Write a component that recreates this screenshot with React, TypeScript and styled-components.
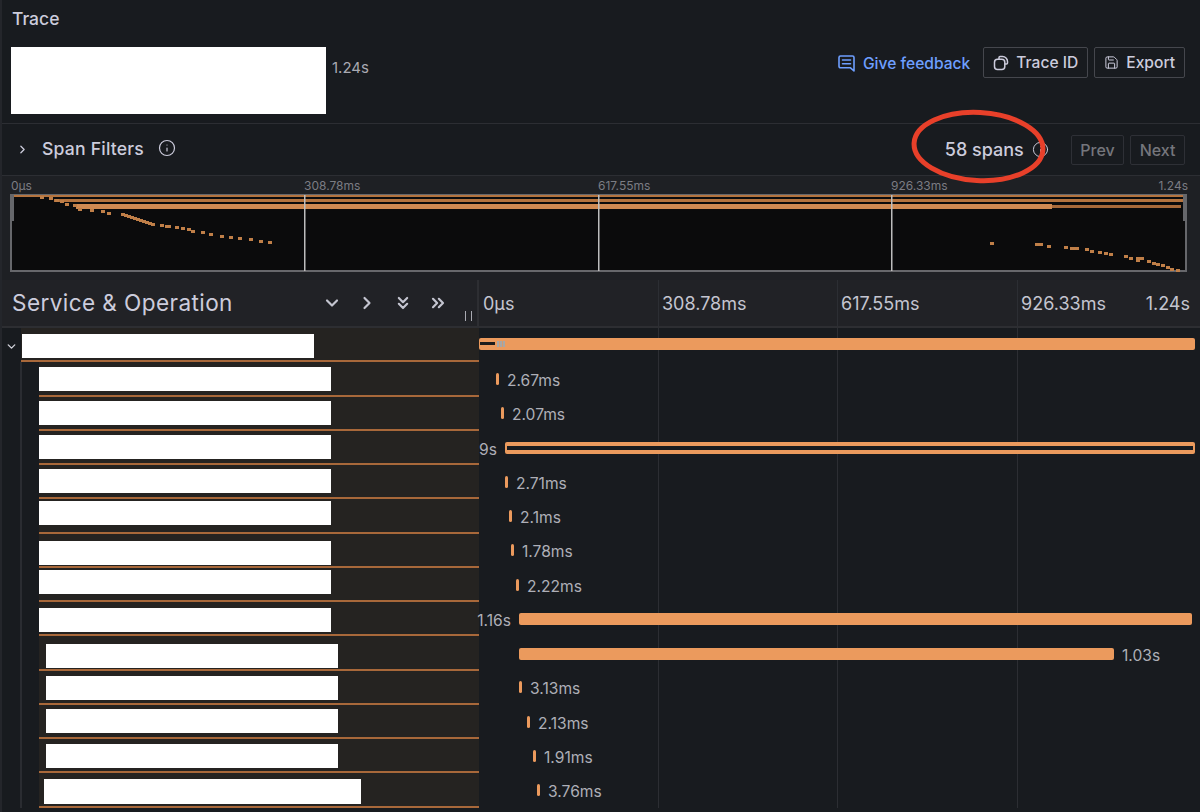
import styled, { createGlobalStyle } from 'styled-components';
import { ChevronDown, ChevronRight, ChevronsDown, ChevronsRight, Info, Save } from 'lucide-react';

type Span = {
  inset: number;
  boxWidth: number;
  boxTop: number;
  barTop?: number;
  left: number;
  width: number;
  label?: string;
  labelLeft?: boolean;
  hollow?: boolean;
};

const spans: Span[] = [
  { inset: 22, boxWidth: 292, boxTop: 5.5, barTop: 10, left: 0, width: 716 },
  { inset: 39, boxWidth: 292, boxTop: 4.25, left: 17, width: 3, label: '2.67ms' },
  { inset: 39, boxWidth: 292, boxTop: 4, left: 22, width: 3, label: '2.07ms' },
  { inset: 39, boxWidth: 292, boxTop: 3.75, left: 26, width: 690, label: '9s', labelLeft: true, hollow: true },
  { inset: 39, boxWidth: 292, boxTop: 3.5, left: 26, width: 3, label: '2.71ms' },
  { inset: 39, boxWidth: 292, boxTop: 1.25, left: 30, width: 3, label: '2.1ms' },
  { inset: 39, boxWidth: 292, boxTop: 7, left: 32, width: 3, label: '1.78ms' },
  { inset: 39, boxWidth: 292, boxTop: 1.75, left: 37, width: 3, label: '2.22ms' },
  { inset: 39, boxWidth: 292, boxTop: 5.5, left: 40, width: 673, label: '1.16s', labelLeft: true },
  { inset: 46, boxWidth: 292, boxTop: 7.25, barTop: 11.5, left: 40, width: 595, label: '1.03s' },
  { inset: 46, boxWidth: 292, boxTop: 5, left: 40, width: 3, label: '3.13ms' },
  { inset: 46, boxWidth: 292, boxTop: 3.75, left: 48, width: 3, label: '2.13ms' },
  { inset: 46, boxWidth: 292, boxTop: 4.5, left: 54, width: 3, label: '1.91ms' },
  { inset: 44, boxWidth: 317, boxTop: 5.25, left: 58, width: 3, label: '3.76ms' },
];

const miniDots: [number, number, number?][] = [
  [40, 196], [49, 197], [55, 199], [60, 200], [65, 203], [73, 204], [78, 208], [90, 209],
  [101, 210], [107, 212], [121, 213], [124, 214], [127, 215], [130, 216], [133, 217], [136, 218],
  [139, 219], [142, 220], [145, 221], [148, 222], [151, 223], [160, 224], [165, 225, 6], [175, 226],
  [181, 227], [187, 228], [191, 230], [201, 231], [209, 233], [220, 235], [229, 236], [238, 237],
  [249, 238], [259, 240], [268, 241],
  [990, 242], [1035, 243, 8], [1047, 245], [1064, 246], [1070, 247, 9], [1085, 248], [1090, 250],
  [1098, 251], [1104, 252], [1109, 253], [1124, 255], [1129, 257], [1136, 257, 8], [1136, 259],
  [1147, 260], [1152, 262], [1156, 263], [1161, 264], [1166, 266], [1170, 268], [1176, 269],
];

const GlobalStyle = createGlobalStyle`
  html, body {
    margin: 0;
    background: #181b1f;
  }
  * {
    box-sizing: border-box;
  }
`;

const Page = styled.div`
  position: relative;
  width: 1200px;
  height: 812px;
  overflow: hidden;
  background: #181b1f;
  color: #ccccdc;
  font-family: Inter, 'Liberation Sans', sans-serif;
  border-left: 2px solid #24262b;
`;

const TraceHeader = styled.header`
  height: 124px;
  padding: 8px 15px 0 9px;
  border-bottom: 1px solid #2c2e33;
`;

const TraceTitle = styled.div`
  margin-left: 1px;
  font-size: 17.5px;
  font-weight: 500;
  line-height: 21px;
`;

const HeaderRow = styled.div`
  display: flex;
  align-items: flex-start;
  margin-top: 18px;
`;

const Redacted = styled.div<{ $w: number; $h: number }>`
  flex: none;
  width: ${(p) => p.$w}px;
  height: ${(p) => p.$h}px;
  background: #fff;
`;

const Duration = styled.span`
  margin: 12px 0 0 6px;
  font-size: 15px;
  line-height: 18px;
  color: #a9aab2;
`;

const HeaderActions = styled.div`
  display: flex;
  align-items: center;
  gap: 6px;
  margin-left: auto;
`;

const FeedbackLink = styled.a`
  display: flex;
  align-items: center;
  gap: 7px;
  margin: 2px 7px 0 0;
  font-size: 15.6px;
  font-weight: 500;
  color: #6e9fff;
`;

const OutlineButton = styled.button<{ $muted?: boolean }>`
  display: flex;
  align-items: center;
  justify-content: center;
  gap: 7px;
  height: ${(p) => (p.$muted ? 30 : 31)}px;
  padding: 0 ${(p) => (p.$muted ? 8.5 : 9)}px;
  background: transparent;
  border: 1px solid ${(p) => (p.$muted ? '#2e3036' : '#45474d')};
  border-radius: 2px;
  font-family: inherit;
  font-size: ${(p) => (p.$muted ? 16 : 15.6)}px;
  font-weight: 500;
  color: ${(p) => (p.$muted ? '#75767c' : '#ccccdc')};
`;

const FilterBar = styled.div`
  display: flex;
  align-items: center;
  height: 52px;
  padding: 0 15px 0 14px;
  border-bottom: 1px solid #2c2e33;
`;

const FilterTitle = styled.span`
  margin: 0 14px 3px 13px;
  font-size: 17.6px;
  font-weight: 500;
  letter-spacing: 0.2px;
`;

const FilterInfo = styled(Info)`
  margin-bottom: 3px;
`;

const SpanCount = styled.div`
  display: flex;
  align-items: center;
  gap: 8px;
  margin: 0 22px 0 auto;
  font-size: 18px;
  font-weight: 500;
`;

const FilterPager = styled.div`
  display: flex;
  gap: 6px;
`;

const MinimapSection = styled.section`
  height: 104px;
  padding: 2px 12px 0 8px;
  background: #1e2024;
`;

const MinimapTicks = styled.div`
  display: grid;
  grid-template-columns: 293px 294px 293px 1fr;
  height: 16px;
  padding-left: 1px;
  font-size: 12px;
  line-height: 16px;
  color: #7b7c83;
`;

const MinimapLast = styled.div`
  display: flex;
  justify-content: space-between;
`;

const MinimapChart = styled.svg`
  display: block;
  width: 1177px;
  height: 78px;
`;

const TableHeader = styled.div`
  display: grid;
  grid-template-columns: 477px 1fr;
  height: 48px;
  background: #212226;
  border-bottom: 2px solid #2d2e32;
`;

const ServiceHead = styled.div`
  position: relative;
  display: flex;
  align-items: center;
  padding: 0 29px 0 10px;
  border-right: 2px solid #2d2e32;
`;

const ServiceTitle = styled.h2`
  margin: 0 auto 1px 0;
  font-size: 22.6px;
  font-weight: 400;
  letter-spacing: 0.4px;
  color: #ccccdc;
`;

const CollapseButtons = styled.div`
  display: flex;
  gap: 15.5px;
  color: #c4c5d0;
`;

const ResizeGrip = styled.span`
  position: absolute;
  right: 5px;
  bottom: 5px;
  width: 7px;
  height: 10px;
  border-left: 1px solid #a9aab2;
  border-right: 1px solid #a9aab2;
`;

const TimeHead = styled.div`
  display: grid;
  grid-template-columns: 179px 179px 180px 1fr;
  font-size: 18px;
`;

const TimeCell = styled.div`
  display: flex;
  align-items: center;
  justify-content: space-between;
  padding: 0 10px 0 4px;
  color: #c4c5d0;

  & + & {
    border-left: 1px solid #2c2e33;
    padding-left: 3px;
  }
`;

const SpanRow = styled.div`
  display: grid;
  grid-template-columns: 477px 1fr;
  height: 34.25px;
`;

const NameCell = styled.div`
  display: flex;
`;

const Gutter = styled.div<{ $w: number }>`
  flex: none;
  width: ${(p) => p.$w}px;
  display: flex;
  align-items: center;
  padding-left: 3px;
  color: #d0d1d9;
`;

const GuideLine = styled.span`
  width: 17px;
  height: 100%;
  border-right: 2px solid #2a2c31;
`;

const RowToggle = styled(ChevronDown)`
  margin-top: 3px;
`;

const NameBody = styled.div<{ $top: number; $pad: number }>`
  flex: 1;
  padding: ${(p) => p.$top}px 0 0 ${(p) => p.$pad}px;
  background: #252321;
  border-bottom: 2px solid #a8683a;
`;

const Track = styled.div`
  position: relative;
  background:
    linear-gradient(#2c2e33, #2c2e33) 179px 0 / 1px 100% no-repeat,
    linear-gradient(#2c2e33, #2c2e33) 358px 0 / 1px 100% no-repeat,
    linear-gradient(#2c2e33, #2c2e33) 538px 0 / 1px 100% no-repeat;
`;

const Bar = styled.div`
  position: absolute;
  height: 12px;
  background: #eb9a5d;
  border-radius: 2px;
`;

const BarHollow = styled.span`
  position: absolute;
  inset: 4px 2px;
  background: #181b1f;
`;

const BarLog = styled.span`
  position: absolute;
  left: 1px;
  top: 4px;
  width: 15px;
  height: 3px;
  background: #1c1c1c;
`;

const BarTicks = styled.span`
  position: absolute;
  left: 18px;
  top: 3px;
  width: 8px;
  height: 6px;
  background: repeating-linear-gradient(90deg, #a8a7a6 0 2px, #d69a6c 2px 3px);
`;

const BarLabel = styled.span<{ $left?: boolean }>`
  position: absolute;
  top: -1px;
  ${(p) => (p.$left ? 'right: calc(100% + 8px);' : 'left: calc(100% + 8px);')}
  font-size: 15.6px;
  line-height: 18px;
  white-space: nowrap;
  color: #aeafb7;
`;

const Annotation = styled.svg`
  position: absolute;
  left: 898px;
  top: 100px;
  width: 160px;
  height: 95px;
  pointer-events: none;
`;

const FeedbackIcon = () => (
  <svg width="19" height="19" viewBox="0 0 19 19" fill="none" stroke="currentColor" strokeWidth="1.6">
    <path d="M3.5 2h12A1.5 1.5 0 0 1 17 3.5V17l-3.5-3.2h-10A1.5 1.5 0 0 1 2 12.3V3.5A1.5 1.5 0 0 1 3.5 2Z" strokeLinejoin="round" />
    <path d="M5.5 6h8M5.5 9.7h8" strokeLinecap="round" />
  </svg>
);

const CopyIcon = () => (
  <svg width="16" height="16" viewBox="0 0 16 16" fill="none" stroke="currentColor" strokeWidth="1.5" strokeLinejoin="round">
    <path d="M6 4.2V2.5A1 1 0 0 1 7 1.5h2.5a5 5 0 0 1 5 5V8a1 1 0 0 1-1 1h-1.7" />
    <rect x="1.5" y="4.2" width="10.3" height="10.3" rx="3" />
  </svg>
);

const App = () => {
  return (
    <Page>
      <GlobalStyle />
      <TraceHeader>
        <TraceTitle>Trace</TraceTitle>
        <HeaderRow>
          <Redacted $w={315} $h={67} />
          <Duration>1.24s</Duration>
          <HeaderActions>
            <FeedbackLink>
              <FeedbackIcon />
              Give feedback
            </FeedbackLink>
            <OutlineButton>
              <CopyIcon />
              Trace ID
            </OutlineButton>
            <OutlineButton>
              <Save size={15} strokeWidth={1.6} />
              Export
            </OutlineButton>
          </HeaderActions>
        </HeaderRow>
      </TraceHeader>

      <FilterBar>
        <ChevronRight size={13} strokeWidth={2.4} />
        <FilterTitle>Span Filters</FilterTitle>
        <FilterInfo size={18} strokeWidth={1.6} />
        <SpanCount>
          58 spans
          <Info size={17} strokeWidth={1.4} />
        </SpanCount>
        <FilterPager>
          <OutlineButton $muted>Prev</OutlineButton>
          <OutlineButton $muted>Next</OutlineButton>
        </FilterPager>
      </FilterBar>

      <MinimapSection>
        <MinimapTicks>
          <div>0µs</div>
          <div>308.78ms</div>
          <div>617.55ms</div>
          <MinimapLast>
            <span>926.33ms</span>
            <span>1.24s</span>
          </MinimapLast>
        </MinimapTicks>
        <MinimapChart viewBox="10 194 1177 78">
          <rect x="11" y="195" width="1175" height="76" fill="#0b0b0c" stroke="#66676b" strokeWidth="2" />
          <rect x="13" y="195" width="1171" height="2" fill="#b5743f" />
          <rect x="54" y="199" width="1129" height="3" fill="#b5743f" />
          <rect x="76" y="204" width="976" height="5" fill="#d08a52" />
          <rect x="1052" y="205" width="129" height="3" fill="#a86a3a" />
          {miniDots.map(([x, y, w], i) => (
            <rect key={i} x={x} y={y} width={w ?? 4} height="3" fill="#c07f48" />
          ))}
          <rect x="304" y="195" width="1.5" height="76" fill="#bdbdbd" />
          <rect x="598" y="195" width="1.5" height="76" fill="#bdbdbd" />
          <rect x="891" y="195" width="1.5" height="76" fill="#bdbdbd" />
          <rect x="11" y="195" width="3" height="26" fill="#66676b" />
          <rect x="1183" y="195" width="3" height="26" fill="#66676b" />
        </MinimapChart>
      </MinimapSection>

      <TableHeader>
        <ServiceHead>
          <ServiceTitle>Service &amp; Operation</ServiceTitle>
          <CollapseButtons>
            <ChevronDown size={20} strokeWidth={2.6} />
            <ChevronRight size={20} strokeWidth={2.6} />
            <ChevronsDown size={20} strokeWidth={2.6} />
            <ChevronsRight size={20} strokeWidth={2.6} />
          </CollapseButtons>
          <ResizeGrip />
        </ServiceHead>
        <TimeHead>
          <TimeCell>0µs</TimeCell>
          <TimeCell>308.78ms</TimeCell>
          <TimeCell>617.55ms</TimeCell>
          <TimeCell>
            <span>926.33ms</span>
            <span>1.24s</span>
          </TimeCell>
        </TimeHead>
      </TableHeader>

      {spans.map((span, i) => (
        <SpanRow key={i}>
          <NameCell>
            <Gutter $w={i === 0 ? 19 : 37}>
              {i === 0 ? <RowToggle size={13} strokeWidth={2.6} /> : <GuideLine />}
            </Gutter>
            <NameBody $top={span.boxTop} $pad={span.inset - (i === 0 ? 21 : 39)}>
              <Redacted $w={span.boxWidth} $h={span.boxWidth > 300 ? 25 : 24} />
            </NameBody>
          </NameCell>
          <Track>
            <Bar style={{ left: span.left, width: span.width, top: span.barTop ?? 10.75 }}>
              {i === 0 && <BarLog />}
              {i === 0 && <BarTicks />}
              {span.hollow && <BarHollow />}
              {span.label && <BarLabel $left={span.labelLeft}>{span.label}</BarLabel>}
            </Bar>
          </Track>
        </SpanRow>
      ))}

      <Annotation viewBox="900 100 160 95">
        <ellipse cx="978.5" cy="146.5" rx="64.5" ry="34" fill="none" stroke="#e8402a" strokeWidth="5" transform="rotate(3 978.5 146.5)" />
      </Annotation>
    </Page>
  );
};

export default App;
